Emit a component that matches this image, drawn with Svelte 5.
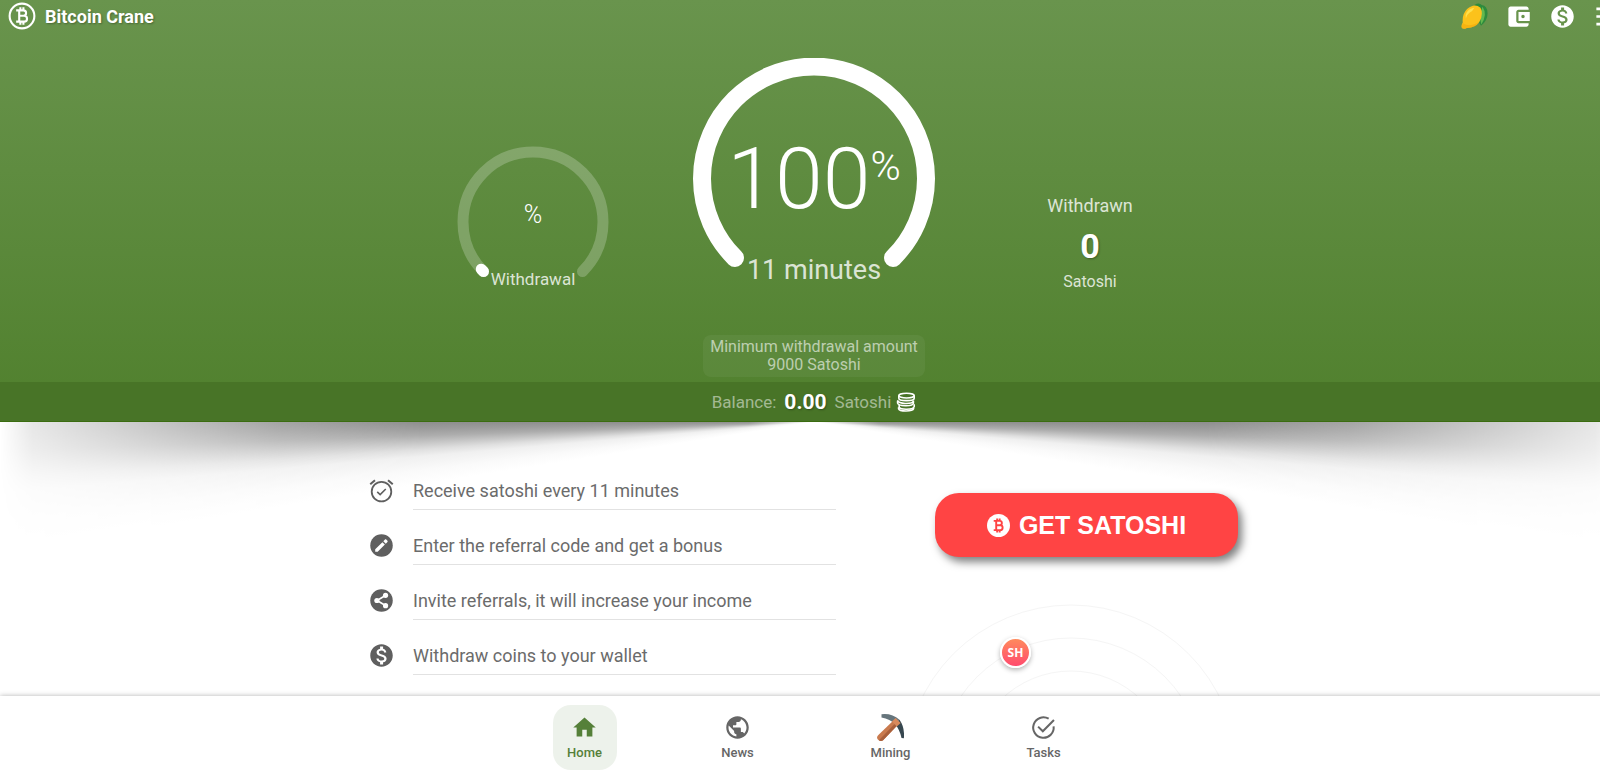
<script>
    const steps = [
        { icon: 'alarm', text: 'Receive satoshi every 11 minutes' },
        { icon: 'edit', text: 'Enter the referral code and get a bonus' },
        { icon: 'share', text: 'Invite referrals, it will increase your income' },
        { icon: 'dollar', text: 'Withdraw coins to your wallet' }
    ];

    const tabs = [
        { icon: 'home', label: 'Home' },
        { icon: 'globe', label: 'News' },
        { icon: 'pickaxe', label: 'Mining' },
        { icon: 'task', label: 'Tasks' }
    ];

    let active = $state('Home');

    const paths = {
        wallet: 'M21 18v1c0 1.1-.9 2-2 2H5c-1.11 0-2-.9-2-2V5c0-1.1.89-2 2-2h14c1.1 0 2 .9 2 2v1h-9c-1.11 0-2 .9-2 2v8c0 1.1.89 2 2 2h9zm-9-2h10V8H12v8zm4-2.5c-.83 0-1.5-.67-1.5-1.5s.67-1.5 1.5-1.5 1.5.67 1.5 1.5-.67 1.5-1.5 1.5z',
        dollar: 'M12 2C6.48 2 2 6.48 2 12s4.48 10 10 10 10-4.48 10-10S17.52 2 12 2zm1.41 16.09V20h-2.67v-1.93c-1.71-.36-3.16-1.46-3.27-3.4h1.96c.1 1.05.82 1.87 2.65 1.87 1.96 0 2.4-.98 2.4-1.59 0-.83-.44-1.61-2.67-2.14-2.48-.6-4.18-1.62-4.18-3.67 0-1.72 1.39-2.84 3.11-3.21V4h2.67v1.95c1.86.45 2.79 1.86 2.85 3.39H14.3c-.05-1.11-.64-1.87-2.22-1.87-1.5 0-2.4.68-2.4 1.64 0 .84.65 1.39 2.67 1.91s4.18 1.39 4.18 3.91c-.01 1.83-1.38 2.83-3.12 3.16z',
        menu: 'M3 20h18v-2.4H3zm0-6.8h18v-2.4H3zM3 4v2.4h18V4z',
        home: 'M10 20v-6h4v6h5v-8h3L12 3 2 12h3v8z',
        globe: 'M12 2C6.48 2 2 6.48 2 12s4.48 10 10 10 10-4.48 10-10S17.52 2 12 2zm-1 17.93c-3.95-.49-7-3.85-7-7.93 0-.62.08-1.21.21-1.79L9 15v1c0 1.1.9 2 2 2v1.93zm6.9-2.54c-.26-.81-1-1.39-1.9-1.39h-1v-3c0-.55-.45-1-1-1H8v-2h2c.55 0 1-.45 1-1V7h2c1.1 0 2-.9 2-2v-.41c2.93 1.19 5 4.06 5 7.41 0 2.08-.8 3.97-2.1 5.39z'
    };
</script>

{#snippet coinMark()}
    <path d="M7 7.2h6.2a2.3 2.3 0 0 1 0 4.6H9.6m0 0h4.2a2.5 2.5 0 0 1 0 5H7M9.6 7.2v9.6M10.6 4.6v2.6M13.2 4.6v2.6M10.6 16.8v2.6M13.2 16.8v2.6" />
{/snippet}

{#snippet icon(name)}
    <svg class="icon" viewBox="0 0 24 24" fill="currentColor" aria-hidden="true">
        {#if paths[name]}
            <path d={paths[name]} />
        {:else if name === 'alarm'}
            <g fill="none" stroke="currentColor" stroke-width="1.6">
                <circle cx="12" cy="13" r="8.7" />
                <path d="M2 6.4 6.2 2.8M22 6.4 17.8 2.8" stroke-width="1.8" />
                <path d="m8.2 13.2 2.6 2.5 5-5" stroke-width="1.4" />
            </g>
        {:else if name === 'edit'}
            <circle cx="12" cy="12" r="10" />
            <path fill="#fff" d="M6.4 15.4v2.2h2.2l6.4-6.4-2.2-2.2zm9.4-5 1.5-1.5c.3-.3.3-.8 0-1.1l-1.1-1.1c-.3-.3-.8-.3-1.1 0l-1.5 1.5z" />
        {:else if name === 'share'}
            <circle cx="12" cy="12" r="10" />
            <path d="m15.5 7.5-7.5 4.5 7.5 4.5" fill="none" stroke="#fff" stroke-width="1.5" />
            <g fill="#fff">
                <circle cx="15.6" cy="7.4" r="2.3" />
                <circle cx="7.9" cy="12" r="2.3" />
                <circle cx="15.6" cy="16.6" r="2.3" />
            </g>
        {:else if name === 'task'}
            <g fill="none" stroke="currentColor" stroke-width="1.8">
                <path d="M16.6 4.2A9.1 9.1 0 1 0 21 11" />
                <path d="m7.2 11.2 4.2 4.2L21.3 5.3" />
            </g>
        {:else if name === 'pickaxe'}
            <path fill="#c97a4e" d="M14.6 5.8 18.6 9.6 5.4 23.4Q3 25 1 22.9T1.2 18.6z" />
            <path fill="#a9603c" d="M18.6 9.6 5.4 23.4Q3.4 24.6 1.7 23.3L16.7 7.8z" />
            <path fill="#66757c" d="M4 .2Q13.2-.9 20 5.1L16.6 8.9Q11.5 4.6 4 3z" />
            <path fill="#37474f" d="M20 5.1Q24.8 11.8 23.9 21.6L21.8 21.4Q20.3 14 16 8.9z" />
            <path fill="#d98a5c" d="m13.2 6.6 3.4-3.1 4.4 4.4-3.4 3.3z" />
        {/if}
    </svg>
{/snippet}

<div class="page">
    <header class="hero">
        <div class="topbar">
            <a class="brand" href="#home">
                <svg class="brand-logo" viewBox="0 0 24 24" fill="none" stroke="#fff" stroke-width="1.8" aria-hidden="true">
                    <circle cx="12" cy="12" r="10.6" />
                    {@render coinMark()}
                </svg>
                <span>Bitcoin Crane</span>
            </a>
            <div class="actions">
                <button aria-label="Lemon">
                    <svg class="icon" viewBox="0 0 28 28" aria-hidden="true">
                        <path fill="#2e8b3d" d="M14 2Q19-1 21.5 2.2 27.5 3 27.6 11q-.3 8-6.8 12.6L16 16z" />
                        <path fill="#63b84f" d="M22.3 4Q27.8 12 21 22.4 18.6 13 22.3 4z" />
                        <path fill="#fcc21b" d="M20.2 5Q14-.3 6.3 6.3 1 11.6 1.8 20.2 0 23 .7 25.3 2.1 27.8 6 25.8q8.6.2 13-6Q23.6 11.6 20.2 5z" />
                        <path fill="#ffe04d" d="M6 9.5Q9.2 5.2 13.8 4.9 12.6 8 8.7 10.2 5.6 12.6 5 16 3.8 12.4 6 9.5z" />
                        <path fill="#f3a90c" d="M2 21Q9 25.6 19.4 19.4q-4.4 6.4-13.4 6.4-4 2-5.3-.5Q.4 23 2 21z" opacity=".6" />
                    </svg>
                </button>
                <button aria-label="Wallet">{@render icon('wallet')}</button>
                <button aria-label="Earnings">{@render icon('dollar')}</button>
                <button aria-label="Menu">{@render icon('menu')}</button>
            </div>
        </div>

        <div class="gauges">
            <div class="gauge small">
                <svg viewBox="0 0 152 152" aria-hidden="true">
                    <path class="track" d="M26.5 125.5a70 70 0 1 1 99 0" />
                    <path class="fill" d="M26.5 125.5a70 70 0 1 1 99 0" pathLength="100" stroke-dasharray="1 200" />
                </svg>
                <div class="gauge-value">%</div>
                <div class="gauge-label">Withdrawal</div>
            </div>
            <div class="gauge large">
                <svg viewBox="0 0 242 242" aria-hidden="true">
                    <path class="fill" d="M42 200a112 112 0 1 1 158 0" />
                </svg>
                <div class="gauge-value">100<sup>%</sup></div>
                <div class="gauge-label">11 minutes</div>
            </div>
            <div class="withdrawn">
                <span class="caption">Withdrawn</span>
                <strong>0</strong>
                <span class="unit">Satoshi</span>
            </div>
        </div>

        <div class="minimum">Minimum withdrawal amount<br />9000 Satoshi</div>

        <div class="balance">
            <span>Balance:</span>
            <strong>0.00</strong>
            <span class="with-coins">
                Satoshi
                <svg class="coins" viewBox="0 0 20 20" fill="none" stroke="#fff" stroke-width="1.6" aria-hidden="true">
                    <ellipse cx="10.5" cy="3.6" rx="7.7" ry="2.4" />
                    <path d="M2.8 3.6v2.6c0 3.2 15.4 3.2 15.4 0V3.6" />
                    <path d="M2 8.2c-1 4 14.8 4.4 15.4.6M1.6 8.8v2.4c.6 3.2 15 3.6 15.8.2V8.4" />
                    <path d="M3.2 13v2c.8 3 14.2 3 15-.4v-2.4M2.6 15.2v1.6c.8 3 14 3 15 0v-1.4" />
                </svg>
            </span>
        </div>
    </header>

    <main>
        <ul class="steps">
            {#each steps as step}
                <li>
                    {@render icon(step.icon)}
                    <a href="#{step.icon}">{step.text}</a>
                </li>
            {/each}
        </ul>

        <div class="side">
            <button class="cta">
                <svg class="cta-icon" viewBox="0 0 24 24" aria-hidden="true">
                    <circle cx="12" cy="12" r="12" fill="#fff" />
                    <g fill="none" stroke="#f44" stroke-width="2">{@render coinMark()}</g>
                </svg>
                GET SATOSHI
            </button>
            <div class="radar">
                <svg viewBox="0 0 334 334" fill="none" stroke="#f5f5f5" aria-hidden="true">
                    <circle cx="167" cy="167" r="166" />
                    <circle cx="167" cy="167" r="133" />
                    <circle cx="167" cy="167" r="100" />
                </svg>
                <span class="pin">SH</span>
            </div>
        </div>
    </main>

    <nav class="tabs">
        {#each tabs as tab}
            <button class="tab" class:active={active === tab.label} onclick={() => (active = tab.label)}>
                {@render icon(tab.icon)}
                <span>{tab.label}</span>
            </button>
        {/each}
    </nav>
</div>

<style>
    :global(body) {
        overflow: hidden;
        background: #fff;
    }

    /* a little wider than the window, the menu button runs off the right edge */
    .page {
        display: flex;
        flex-direction: column;
        width: calc(100% + 28px);
        height: 100vh;
        overflow: hidden;
        font-family: Roboto, sans-serif;
        color: #666;
    }

    button {
        padding: 0;
        border: 0;
        background: none;
        color: inherit;
        font-family: inherit;
        cursor: pointer;
    }

    a {
        color: inherit;
        text-decoration: none;
    }

    .icon {
        display: block;
        flex: none;
        width: 27px;
        height: 27px;
    }

    /* Header */
    .hero {
        position: relative;
        z-index: 1;
        flex: none;
        background: linear-gradient(#69944d, #50802d);
        color: #fff;
    }

    .hero::after {
        content: '';
        position: absolute;
        top: 100%;
        left: 0;
        right: 0;
        height: 130px;
        pointer-events: none;
        background: conic-gradient(
            from 90deg at 50% 0,
            #8e8e8e 0deg,
            #9c9c9c 1deg,
            #adadad 2deg,
            #c6c6c6 3deg,
            #dfdfdf 4deg,
            #f0f0f0 5deg,
            #fafafa 7deg,
            #fff 9deg,
            #fff 171deg,
            #fafafa 173deg,
            #f0f0f0 175deg,
            #dfdfdf 176deg,
            #c6c6c6 177deg,
            #adadad 178deg,
            #9c9c9c 179deg,
            #8e8e8e 180deg
        );
        mask-image: linear-gradient(
            90deg,
            transparent,
            rgba(0, 0, 0, 0.22) 2%,
            rgba(0, 0, 0, 0.45) 8%,
            rgba(0, 0, 0, 0.8) 17%,
            #000 26%,
            #000 46%,
            transparent 50%,
            #000 54%,
            #000 74%,
            rgba(0, 0, 0, 0.8) 83%,
            rgba(0, 0, 0, 0.45) 92%,
            rgba(0, 0, 0, 0.22) 98%,
            transparent
        );
    }

    .topbar {
        display: flex;
        align-items: center;
        justify-content: space-between;
        height: 32px;
        padding: 0 8px;
    }

    .brand {
        display: flex;
        align-items: center;
        gap: 9px;
        font-size: 18px;
        font-weight: 700;
        text-shadow: 1px 1px 2px rgba(0, 0, 0, 0.3);
    }

    .brand-logo {
        width: 28px;
        height: 28px;
    }

    .actions {
        display: flex;
        gap: 17px;
    }

    .gauges {
        display: grid;
        grid-template-columns: 320px 242px 310px;
        justify-content: center;
        padding: 26px 10px 0 0;
    }

    .gauge {
        position: relative;
        justify-self: center;
        text-align: center;
    }

    .gauge svg {
        display: block;
        width: 100%;
    }

    .gauge path {
        fill: none;
        stroke-linecap: round;
    }

    .gauge .track {
        stroke: rgba(255, 255, 255, 0.22);
    }

    .gauge .fill {
        stroke: #fff;
    }

    .gauge-value,
    .gauge-label {
        position: absolute;
        left: 0;
        right: 0;
    }

    .gauge-label {
        color: rgba(255, 255, 255, 0.8);
    }

    .small {
        width: 152px;
        height: 152px;
        margin-top: 88px;
        stroke-width: 11px;
    }

    .small .gauge-value {
        top: 55px;
        font-size: 25px;
        font-weight: 300;
        line-height: 28px;
    }

    .small .gauge-label {
        top: 122px;
        font-size: 17px;
        line-height: 22px;
    }

    .large {
        width: 242px;
        height: 242px;
        stroke-width: 18px;
    }

    .large .gauge-value {
        top: 69px;
        font-size: 86px;
        font-weight: 300;
        line-height: 104px;
    }

    .large sup {
        font-size: 41px;
        line-height: 41px;
        vertical-align: 28px;
    }

    .large .gauge-label {
        top: 196px;
        font-size: 27px;
        line-height: 32px;
    }

    .withdrawn {
        display: flex;
        flex-direction: column;
        align-items: center;
        padding-top: 136px;
        color: rgba(255, 255, 255, 0.8);
        font-size: 18px;
        line-height: 24px;
    }

    .withdrawn strong {
        margin: 10px 0 6px;
        color: #fff;
        font-size: 34px;
        line-height: 36px;
        text-shadow: 1px 1px 2px rgba(0, 0, 0, 0.3);
    }

    .unit {
        font-size: 16px;
    }

    .minimum {
        width: 222px;
        margin: 35px auto 5px;
        padding: 3px 0;
        border-radius: 8px;
        background: rgba(255, 255, 255, 0.05);
        color: rgba(255, 255, 255, 0.6);
        font-size: 16px;
        line-height: 18px;
        text-align: center;
    }

    .balance {
        display: flex;
        align-items: center;
        justify-content: center;
        gap: 8px;
        height: 39px;
        border-bottom: 1px solid #3b6c10;
        background: #487427;
        color: rgba(255, 255, 255, 0.5);
        font-size: 17px;
    }

    .balance strong {
        color: #fff;
        font-size: 21px;
        text-shadow: 1px 1px 2px rgba(0, 0, 0, 0.3);
    }

    .with-coins {
        display: flex;
        align-items: center;
        gap: 5px;
    }

    .coins {
        width: 20px;
        height: 20px;
    }

    /* Content */
    main {
        position: relative;
        z-index: 2;
        display: flex;
        flex: 1;
        gap: 68px;
        width: 892px;
        min-height: 0;
        margin: 0 auto;
    }

    .steps {
        width: 468px;
        margin: 0;
        padding: 45px 0 0;
        list-style: none;
    }

    .steps li {
        display: flex;
        align-items: center;
        gap: 18px;
        height: 47px;
        margin-bottom: 8px;
        font-size: 18px;
        color: #5f5f5f;
    }

    .steps a {
        flex: 1;
        margin-top: 6px;
        padding-bottom: 4px;
        border-bottom: 1px solid #e2e2e2;
        line-height: 28px;
        color: #6b6b6b;
    }

    .side {
        display: flex;
        flex-direction: column;
        align-items: flex-end;
        width: 334px;
        padding-top: 71px;
    }

    .cta {
        display: flex;
        flex: none;
        align-items: center;
        justify-content: center;
        gap: 9px;
        width: 303px;
        height: 64px;
        border-radius: 24px;
        background: #ff4444;
        box-shadow: 4px 5px 8px rgba(0, 0, 0, 0.5);
        color: #fff;
        font-family: 'Liberation Sans', Arial, sans-serif;
        font-size: 25px;
        font-weight: 700;
    }

    .cta-icon {
        width: 23px;
        height: 23px;
    }

    .radar {
        position: relative;
        flex: none;
        width: 334px;
        height: 334px;
        margin-top: 47px;
    }

    .pin {
        position: absolute;
        top: 33px;
        left: 96px;
        width: 27px;
        height: 27px;
        border: 2px solid #fff;
        border-radius: 50%;
        background: linear-gradient(#ff8a5c, #ff4b6e);
        box-shadow: 0 2px 5px rgba(0, 0, 0, 0.3);
        color: #fff;
        font-family: 'Open Sans', sans-serif;
        font-size: 12px;
        font-weight: 700;
        line-height: 28px;
        text-align: center;
    }

    /* Bottom navigation */
    .tabs {
        position: relative;
        z-index: 3;
        display: flex;
        flex: none;
        align-items: center;
        justify-content: center;
        gap: 89px;
        box-sizing: border-box;
        height: 76px;
        padding-top: 6px;
        background: #fff;
        box-shadow: 0 0 5px rgba(0, 0, 0, 0.3);
    }

    .tab {
        display: flex;
        flex-direction: column;
        align-items: center;
        justify-content: center;
        gap: 4px;
        width: 64px;
        height: 65px;
        border-radius: 18px;
        font-size: 13px;
        font-weight: 500;
        line-height: 16px;
    }

    .tab.active {
        background: #edf2eb;
        color: #558039;
    }
</style>
